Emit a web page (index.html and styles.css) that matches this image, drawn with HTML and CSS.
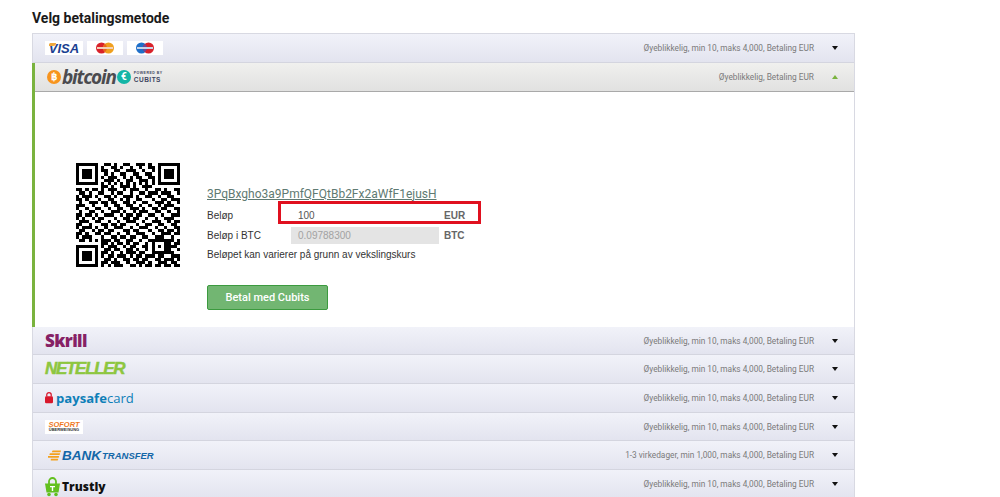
FILE: index.html
```html
<!DOCTYPE html>
<html lang="nb">
  <head>
    <meta charset="UTF-8" />
    <meta name="viewport" content="width=device-width, initial-scale=1.0" />
    <title>Velg betalingsmetode</title>
    <link rel="stylesheet" href="styles.css">
  </head>
  <body>
    <div class="payment">
      <h2>Velg betalingsmetode</h2>
      <div class="methods">
        <div class="method first">
          <div class="logo cards">
            <span class="chip visa"><i></i>VISA</span>
            <span class="chip">
              <svg width="24" height="14" viewBox="0 0 24 14"><circle cx="8.5" cy="7" r="5.5" fill="#d9222a"/><circle cx="15.5" cy="7" r="5.5" fill="#f0a01e"/><path d="M12 2.8a5.5 5.5 0 0 1 0 8.4a5.5 5.5 0 0 1 0-8.4z" fill="#e8641f"/><rect x="4" y="6" width="16" height="2" fill="#f3d0b8"/></svg>
            </span>
            <span class="chip">
              <svg width="24" height="14" viewBox="0 0 24 14"><circle cx="8.5" cy="7" r="5.5" fill="#1f6fc9"/><circle cx="15.5" cy="7" r="5.5" fill="#d9222a"/><path d="M12 2.8a5.5 5.5 0 0 1 0 8.4a5.5 5.5 0 0 1 0-8.4z" fill="#6a4a9a"/><rect x="4" y="6" width="16" height="2" fill="#c8d4ea"/></svg>
            </span>
          </div>
          <div class="info">Øyeblikkelig, min 10, maks 4,000, Betaling EUR<span class="arrow"></span></div>
        </div>

        <div class="openMethod">
          <div class="method active">
            <div class="logo bitcoin">
              <span class="coin orange">฿</span>
              <span class="btcName">bitcoin</span>
              <span class="coin teal">€</span>
              <span class="cubits"><small>POWERED BY</small>CUBITS</span>
            </div>
            <div class="info">Øyeblikkelig, Betaling EUR<span class="arrow up"></span></div>
          </div>
          <div class="methodBody">
            <svg class="qr" viewBox="0 0 33 33" shape-rendering="crispEdges">
              <path id="finder" d="M0 0h7v7H0zM1 1v5h5V1zM2 2h3v3H2z"/>
              <use href="#finder" x="26"/>
              <use href="#finder" y="26"/>
              <path d="M24 24h5v5h-5zM25 25v3h3v-3zM26 26h1v1h-1z"/>
              <path fill="none" stroke="#000" d="M9 .5H11M12 .5H13M15 .5H17M19 .5H22M23 .5H24M8 1.5H9M11 1.5H13M14 1.5H15M17 1.5H18M20 1.5H21M23 1.5H25M8 2.5H10M12 2.5H14M16 2.5H19M21 2.5H22M24 2.5H25M9 3.5H10M11 3.5H12M14 3.5H16M18 3.5H20M22 3.5H24M8 4.5H9M10 4.5H13M15 4.5H16M17 4.5H18M19 4.5H21M23 4.5H25M9 5.5H12M13 5.5H14M16 5.5H18M20 5.5H23M24 5.5H25M8 6.5H9M10 6.5H11M12 6.5H13M14 6.5H15M16 6.5H17M18 6.5H19M20 6.5H21M22 6.5H23M24 6.5H25M8 7.5H10M11 7.5H12M14 7.5H17M18 7.5H19M21 7.5H24M0 8.5H2M3 8.5H4M5 8.5H7M8 8.5H9M10 8.5H13M15 8.5H16M17 8.5H20M22 8.5H23M25 8.5H27M28 8.5H29M31 8.5H33M1 9.5H3M4 9.5H5M7 9.5H9M11 9.5H12M13 9.5H15M17 9.5H18M20 9.5H22M23 9.5H26M27 9.5H30M32 9.5H33M0 10.5H1M2 10.5H5M6 10.5H7M9 10.5H11M12 10.5H13M15 10.5H18M19 10.5H20M22 10.5H24M26 10.5H27M29 10.5H31M0 11.5H2M3 11.5H4M7 11.5H8M10 11.5H12M14 11.5H15M16 11.5H17M19 11.5H21M24 11.5H25M27 11.5H29M30 11.5H33M1 12.5H2M4 12.5H7M8 12.5H10M11 12.5H13M15 12.5H17M18 12.5H19M21 12.5H23M25 12.5H28M29 12.5H30M32 12.5H33M0 13.5H3M5 13.5H6M9 13.5H10M12 13.5H14M16 13.5H18M20 13.5H21M23 13.5H24M26 13.5H27M28 13.5H31M0 14.5H1M3 14.5H4M6 14.5H8M10 14.5H11M13 14.5H15M17 14.5H20M21 14.5H22M24 14.5H26M27 14.5H29M31 14.5H33M1 15.5H2M4 15.5H6M8 15.5H9M11 15.5H14M15 15.5H16M18 15.5H19M20 15.5H23M25 15.5H27M29 15.5H30M32 15.5H33M0 16.5H2M3 16.5H5M6 16.5H7M9 16.5H12M14 16.5H15M16 16.5H18M19 16.5H21M23 16.5H25M27 16.5H28M30 16.5H33M0 17.5H1M2 17.5H3M5 17.5H6M7 17.5H9M12 17.5H13M15 17.5H17M18 17.5H20M22 17.5H23M25 17.5H26M28 17.5H31M1 18.5H4M6 18.5H8M10 18.5H11M13 18.5H14M16 18.5H19M21 18.5H22M24 18.5H27M29 18.5H30M31 18.5H33M0 19.5H2M4 19.5H5M8 19.5H10M11 19.5H13M14 19.5H16M19 19.5H20M22 19.5H24M26 19.5H28M30 19.5H32M0 20.5H1M2 20.5H5M6 20.5H7M9 20.5H10M12 20.5H15M17 20.5H18M20 20.5H23M25 20.5H26M28 20.5H29M31 20.5H33M1 21.5H3M5 21.5H6M7 21.5H9M10 21.5H12M15 21.5H17M18 21.5H20M23 21.5H24M26 21.5H28M29 21.5H31M32 21.5H33M0 22.5H2M3 22.5H4M6 22.5H8M9 22.5H11M13 22.5H14M16 22.5H17M19 22.5H22M24 22.5H25M27 22.5H30M31 22.5H33M0 23.5H1M2 23.5H5M8 23.5H9M11 23.5H13M14 23.5H16M17 23.5H19M21 23.5H23M25 23.5H28M30 23.5H31M1 24.5H3M4 24.5H5M6 24.5H7M8 24.5H11M12 24.5H14M16 24.5H18M20 24.5H21M23 24.5H24M29 24.5H31M32 24.5H33M8 25.5H10M11 25.5H12M13 25.5H15M16 25.5H17M18 25.5H20M22 25.5H23M29 25.5H30M31 25.5H33M8 26.5H9M10 26.5H13M15 26.5H16M17 26.5H19M21 26.5H23M29 26.5H32M9 27.5H11M12 27.5H14M16 27.5H18M19 27.5H20M22 27.5H23M29 27.5H30M32 27.5H33M8 28.5H10M11 28.5H12M14 28.5H15M16 28.5H19M20 28.5H22M29 28.5H31M8 29.5H9M10 29.5H12M13 29.5H16M17 29.5H18M19 29.5H21M22 29.5H25M26 29.5H28M30 29.5H33M9 30.5H11M12 30.5H13M15 30.5H17M18 30.5H20M21 30.5H23M25 30.5H27M28 30.5H31M32 30.5H33M8 31.5H10M11 31.5H14M16 31.5H17M19 31.5H22M23 31.5H24M26 31.5H29M30 31.5H32M8 32.5H9M10 32.5H11M12 32.5H15M17 32.5H19M20 32.5H21M22 32.5H24M25 32.5H27M28 32.5H30M31 32.5H33"/>
            </svg>
            <div class="qrForm">
              <a class="address">3PqBxgho3a9PmfQFQtBb2Fx2aWfF1ejusH</a>
              <div class="formRow amountRow">
                <span class="label">Beløp</span>
                <span class="field">100</span>
                <span class="unit">EUR</span>
                <span class="highlight"></span>
              </div>
              <div class="formRow">
                <span class="label">Beløp i BTC</span>
                <span class="field disabled">0.09788300</span>
                <span class="unit">BTC</span>
              </div>
              <p class="note">Beløpet kan varierer på grunn av vekslingskurs</p>
              <button class="payBtn">Betal med Cubits</button>
            </div>
          </div>
        </div>

        <div class="method">
          <div class="logo skrill">Skrill</div>
          <div class="info">Øyeblikkelig, min 10, maks 4,000, Betaling EUR<span class="arrow"></span></div>
        </div>
        <div class="method">
          <div class="logo neteller">NETELLER</div>
          <div class="info">Øyeblikkelig, min 10, maks 4,000, Betaling EUR<span class="arrow"></span></div>
        </div>
        <div class="method">
          <div class="logo paysafe">
            <svg width="8" height="13" viewBox="0 0 9 14"><path d="M2 6V4a2.5 2.5 0 0 1 5 0v2" fill="none" stroke="#d8172b" stroke-width="1.4"/><rect y="5.5" width="9" height="8" rx="1.5" fill="#d8172b"/></svg>
            <span>paysafe<em>card</em></span>
          </div>
          <div class="info">Øyeblikkelig, min 10, maks 4,000, Betaling EUR<span class="arrow"></span></div>
        </div>
        <div class="method">
          <div class="logo sofort"><b>SOFORT</b><small>ÜBERWEISUNG</small></div>
          <div class="info">Øyeblikkelig, min 10, maks 4,000, Betaling EUR<span class="arrow"></span></div>
        </div>
        <div class="method">
          <div class="logo bank">
            <svg width="13" height="11" viewBox="0 0 14 11" fill="#f4a11d"><path d="M5 0h9l-.5 2H4zM2 3h11l-.5 2H1.500zM0 6h12l-.5 2H0zM3 9h8l-.5 2H3z"/></svg>
            <b>BANK</b><span>TRANSFER</span>
          </div>
          <div class="info">1-3 virkedager, min 1,000, maks 4,000, Betaling EUR<span class="arrow"></span></div>
        </div>
        <div class="method">
          <div class="logo trustly">
            <svg width="15" height="20" viewBox="0 0 15 20"><path d="M4 7V4.500a3.500 3.500 0 0 1 7 0V7" fill="none" stroke="#62c01e" stroke-width="1.800"/><path d="M0 6.500h15l-1.500 9h-12z" fill="#62c01e"/><circle cx="4" cy="17.500" r="1.800" fill="#62c01e"/><circle cx="11" cy="17.500" r="1.800" fill="#62c01e"/><path d="M5 9h5v1.300H8.200V14H6.800v-3.700H5z" fill="#fff"/></svg>
            <span>Trustly</span>
          </div>
          <div class="info">Øyeblikkelig, min 10, maks 4,000, Betaling EUR<span class="arrow"></span></div>
        </div>
      </div>
    </div>
  </body>
</html>
```

FILE: styles.css
```css
* {
  box-sizing: border-box;
}
html,
body {
  margin: 0;
  height: 497px;
  overflow: hidden;
  background-color: #ffffff;
}
.payment {
  width: 855px;
  padding: 10px 0 0 32px;
  font-family: Roboto, sans-serif;
}
.payment h2 {
  margin: 0 0 6px;
  font-size: 14px;
  line-height: 17px;
  font-weight: 700;
  color: #1a1a1a;
}
.methods {
  border: 1px solid #d8d9e2;
  border-width: 1px 1px 0 1px;
}
.method {
  height: 28.7px;
  display: flex;
  justify-content: space-between;
  align-items: center;
  padding: 0 16px 0 12px;
  background: linear-gradient(#f1f2f9, #e3e4ef);
  border-bottom: 1px solid #d4d5df;
}
.method.first {
  height: 29px;
}
.method.active {
  background: linear-gradient(#f0f0ee, #e1e1e0);
  border-bottom: 1px solid #a9a9a9;
}
.info {
  display: flex;
  align-items: center;
  font-size: 8.300px;
  color: #7a7a7a;
}
.arrow {
  width: 0;
  height: 0;
  margin-left: 18px;
  border-left: 3.500px solid transparent;
  border-right: 3.500px solid transparent;
  border-top: 4px solid #111111;
}
.arrow.up {
  border-top: 0;
  border-bottom: 4px solid #7ab33e;
}
.logo {
  display: flex;
  align-items: center;
}

/* cards */
.cards {
  gap: 4px;
}
.chip {
  width: 36px;
  height: 14px;
  display: flex;
  justify-content: center;
  align-items: center;
  background-color: #ffffff;
}
.chip.visa {
  width: 38px;
  position: relative;
  font-family: "Liberation Sans", sans-serif;
  font-size: 13px;
  font-weight: 700;
  font-style: italic;
  color: #1b3f91;
}
.chip.visa i {
  position: absolute;
  left: 4px;
  top: 2px;
  width: 7px;
  height: 3px;
  background-color: #f0a83c;
  border-radius: 2px 0 4px 0;
}

/* bitcoin */
.openMethod {
  border-left: 3px solid #7ab33e;
  margin-left: -1px;
}
.bitcoin {
  gap: 1px;
}
.coin {
  width: 14px;
  height: 14px;
  display: flex;
  justify-content: center;
  align-items: center;
  border-radius: 50%;
  color: #ffffff;
  font-size: 10px;
  font-weight: 700;
}
.coin.orange {
  background-color: #f7941d;
}
.coin.teal {
  background-color: #13b5a6;
}
.btcName {
  font-family: "Open Sans", sans-serif;
  font-size: 19px;
  line-height: 20px;
  font-weight: 700;
  font-style: italic;
  letter-spacing: -1.2px;
  color: #4b4b4f;
}
.cubits {
  display: flex;
  flex-direction: column;
  margin-left: 2px;
  font-family: "Liberation Sans", sans-serif;
  font-size: 6.500px;
  line-height: 7px;
  font-weight: 700;
  letter-spacing: 0.5px;
  color: #40465f;
}
.cubits small {
  font-size: 3.500px;
  line-height: 5px;
}

.methodBody {
  height: 235px;
  display: flex;
  padding: 71px 0 0 41px;
  background-color: #ffffff;
}
.qr {
  width: 104px;
  height: 104px;
  flex-shrink: 0;
  margin-right: 27px;
}
.qrForm {
  display: flex;
  flex-direction: column;
  align-items: flex-start;
  padding-top: 23px;
  font-family: "Liberation Sans", sans-serif;
  font-size: 10px;
  color: #333333;
}
.address {
  font-family: Roboto, sans-serif;
  font-size: 12px;
  line-height: 16px;
  color: #5f7a72;
  text-decoration: underline;
}
.formRow {
  height: 17px;
  display: flex;
  align-items: center;
  margin-top: 3.300px;
  position: relative;
}
.amountRow {
  margin-top: 5px;
}
.label {
  width: 84px;
}
.field {
  width: 148px;
  height: 17px;
  line-height: 17px;
  padding-left: 7px;
  color: #555555;
}
.field.disabled {
  background-color: #e4e4e4;
  color: #a2a2a2;
}
.unit {
  margin-left: 5px;
  font-weight: 700;
  color: #666666;
}
.highlight {
  position: absolute;
  left: 71px;
  top: -6px;
  width: 203px;
  height: 23px;
  border: 3px solid #e0101f;
}
.note {
  margin: 4.500px 0 0;
  line-height: 13px;
}
.payBtn {
  width: 121px;
  height: 25px;
  margin-top: 23.500px;
  padding: 0;
  border: 1px solid #3c9a3f;
  border-radius: 2px;
  background-color: #72b672;
  color: #ffffff;
  font-family: Roboto, sans-serif;
  font-size: 11px;
  font-weight: 500;
}

/* other logos */
.skrill {
  font-family: "Open Sans", sans-serif;
  font-size: 17px;
  font-weight: 800;
  letter-spacing: -0.6px;
  color: #862165;
}
.neteller {
  font-family: "Liberation Sans", sans-serif;
  font-size: 17px;
  font-weight: 700;
  font-style: italic;
  letter-spacing: -1.300px;
  color: #8dc63f;
  -webkit-text-stroke: 0.5px #8dc63f;
}
.paysafe {
  gap: 3px;
  font-family: "Open Sans", sans-serif;
  font-size: 13.100px;
  font-weight: 700;
  color: #0e7fb8;
}
.paysafe em {
  font-style: normal;
  font-weight: 400;
}
.sofort {
  width: 38px;
  height: 14px;
  flex-direction: column;
  justify-content: center;
  background-color: #ffffff;
  font-family: "Liberation Sans", sans-serif;
}
.sofort b {
  font-size: 7.500px;
  line-height: 7px;
  font-style: italic;
  color: #f0791e;
}
.sofort small {
  font-size: 4px;
  line-height: 4px;
  font-weight: 700;
  color: #333333;
}
.bank {
  padding-left: 3px;
  gap: 1px;
  font-family: "Liberation Sans", sans-serif;
  font-style: italic;
  font-weight: 700;
  color: #1367a8;
}
.bank b {
  font-size: 13.500px;
}
.bank span {
  font-size: 9.500px;
}
.trustly {
  gap: 2px;
  padding-top: 6px;
  font-family: "Open Sans", sans-serif;
  font-size: 12px;
  font-weight: 800;
  color: #111111;
}
```
